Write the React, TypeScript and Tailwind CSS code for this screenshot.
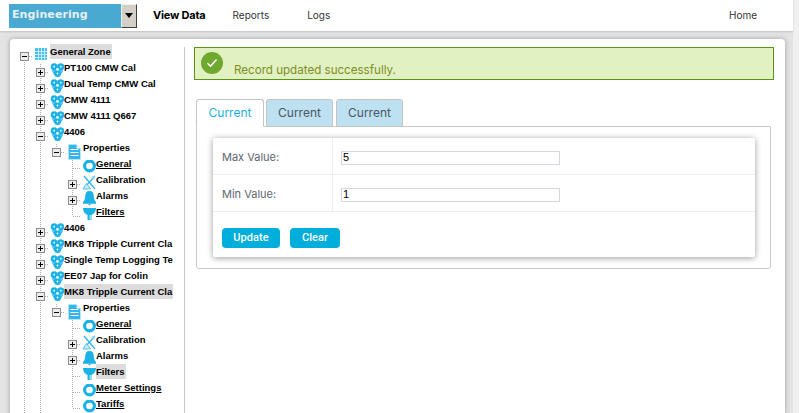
import React from "react";

const B = "#1cb2e6";

function Net() {
  return (
    <svg width="16" height="16" viewBox="0 0 16 16" className="shrink-0 -mt-px">
      <circle cx="9.500" cy="7" r="5.500" fill="#4fc4ee" />
      <circle cx="6.200" cy="3.700" r="3.500" fill={B} />
      <circle cx="12.800" cy="3.700" r="3.500" fill={B} />
      <circle cx="9.500" cy="10.500" r="3.500" fill={B} />
      <circle cx="6.200" cy="3.700" r="0.900" fill="#fff" />
      <circle cx="12.800" cy="3.700" r="0.900" fill="#fff" />
      <circle cx="9.500" cy="10.500" r="0.900" fill="#fff" />
      <circle cx="9.500" cy="6.400" r="1.300" fill="#fff" />
    </svg>
  );
}
function Grid() {
  return (
    <svg width="16" height="16" viewBox="0 0 16 16" className="shrink-0">
      <rect x="3" y="0" width="12" height="12" rx="1" fill="#45bdec" />
      {[6, 9, 12].map((v) => (
        <React.Fragment key={v}>
          <rect x={v} y="0" width="1" height="12" fill="#c5ecfb" />
          <rect x="3" y={v - 3} width="12" height="1" fill="#c5ecfb" />
        </React.Fragment>
      ))}
    </svg>
  );
}
function Doc() {
  return (
    <svg width="18" height="16" viewBox="0 0 18 16" className="shrink-0">
      <path d="M4.500 0.500h8l4 4v11h-12z" fill="#35b6ea" stroke="#b5e6f8" strokeWidth="1" />
      <path d="M12.500 0.500v4h4z" fill="#e6f7fd" />
      <path d="M6.500 5.500h8M6.500 8.500h8M6.500 11.500h8" stroke="#fff" strokeWidth="1.200" />
    </svg>
  );
}
function Ring() {
  return (
    <svg width="16" height="16" viewBox="0 0 16 16" className="shrink-0">
      <circle cx="9.500" cy="6" r="4.900" fill="#fff" stroke={B} strokeWidth="3.200" />
    </svg>
  );
}
function Cal() {
  return (
    <svg width="16" height="16" viewBox="0 0 16 16" className="shrink-0 -mt-px">
      <path d="M4 1l11 13M15 1L5 12" stroke="#35b6ea" strokeWidth="1.300" fill="none" />
      <path d="M3 14l3.500-5.500 4 5.500z" fill="#c5ebf9" stroke="#35b6ea" strokeWidth="0.800" />
      <path d="M11 2l4-1.500-1 4.500z" fill="#8ad6f3" />
    </svg>
  );
}
function Bell() {
  return (
    <svg width="16" height="16" viewBox="0 0 16 16" className="shrink-0 -mt-[2px]">
      <path d="M9.500 1c3 0 4 2 4.200 4.500.2 3 .5 5 2.300 6.500H3c1.800-1.500 2.100-3.500 2.300-6.500C5.500 3 6.500 1 9.500 1z" fill={B} />
      <rect x="3" y="12" width="13" height="1.800" fill={B} />
      <path d="M8 14h3l-1.500 1.600z" fill={B} />
    </svg>
  );
}
function Funnel() {
  return (
    <svg width="16" height="16" viewBox="0 0 16 16" className="shrink-0 -mt-px">
      <path d="M3 1h13c0 4-2.500 6-4.500 7v5H7.500V8C5.500 7 3 5 3 1z" fill={B} />
      <path d="M9.500 8h2v5h-2z" fill="#9adcf5" />
    </svg>
  );
}

const Guide = ({ on }: { on: boolean }) => (
  <svg width="16" height="16" viewBox="0 0 16 16" className="shrink-0" shapeRendering="crispEdges">
    {on && <path d="M8.500 0v16" stroke="#b0b0b0" strokeDasharray="1 1" />}
  </svg>
);

type Kind = "plus" | "minus" | "tee" | "corner";

function Conn({ kind, top = true, bottom = true }: { kind: Kind; top?: boolean; bottom?: boolean }) {
  const box = kind === "plus" || kind === "minus";
  const b = kind === "corner" ? false : bottom;
  return (
    <svg width="16" height="16" viewBox="0 0 16 16" className="shrink-0" shapeRendering="crispEdges">
      {top && <path d="M8.500 0v8" stroke="#b0b0b0" strokeDasharray="1 1" />}
      {b && <path d="M8.500 8v8" stroke="#b0b0b0" strokeDasharray="1 1" />}
      <path d="M8.500 8.500H16" stroke="#b0b0b0" strokeDasharray="1 1" />
      {box && (
        <>
          <rect x="4.500" y="4.500" width="8" height="8" fill="#ececec" stroke="#8c8c8c" />
          <path d="M6 8.500h5" stroke="#000" />
          {kind === "plus" && <path d="M8.500 6v5" stroke="#000" />}
        </>
      )}
    </svg>
  );
}

type Node = {
  level: number;
  kind: Kind;
  icon: React.ReactNode;
  text: string;
  u?: boolean;
  sel?: boolean;
  last?: boolean;
};

const rows: Node[] = [
  { level: 0, kind: "minus", icon: <Grid />, text: "General Zone", sel: true },
  { level: 1, kind: "plus", icon: <Net />, text: "PT100 CMW Cal" },
  { level: 1, kind: "plus", icon: <Net />, text: "Dual Temp CMW Cal" },
  { level: 1, kind: "plus", icon: <Net />, text: "CMW 4111" },
  { level: 1, kind: "plus", icon: <Net />, text: "CMW 4111 Q667" },
  { level: 1, kind: "minus", icon: <Net />, text: "4406" },
  { level: 2, kind: "minus", icon: <Doc />, text: "Properties", last: true },
  { level: 3, kind: "tee", icon: <Ring />, text: "General", u: true },
  { level: 3, kind: "plus", icon: <Cal />, text: "Calibration" },
  { level: 3, kind: "plus", icon: <Bell />, text: "Alarms" },
  { level: 3, kind: "corner", icon: <Funnel />, text: "Filters", u: true },
  { level: 1, kind: "plus", icon: <Net />, text: "4406" },
  { level: 1, kind: "plus", icon: <Net />, text: "MK8 Tripple Current Cla" },
  { level: 1, kind: "plus", icon: <Net />, text: "Single Temp Logging Te" },
  { level: 1, kind: "plus", icon: <Net />, text: "EE07 Jap for Colin" },
  { level: 1, kind: "minus", icon: <Net />, text: "MK8 Tripple Current Cla", sel: true },
  { level: 2, kind: "minus", icon: <Doc />, text: "Properties", last: true },
  { level: 3, kind: "tee", icon: <Ring />, text: "General", u: true },
  { level: 3, kind: "plus", icon: <Cal />, text: "Calibration" },
  { level: 3, kind: "plus", icon: <Bell />, text: "Alarms" },
  { level: 3, kind: "tee", icon: <Funnel />, text: "Filters", sel: true },
  { level: 3, kind: "tee", icon: <Ring />, text: "Meter Settings", u: true },
  { level: 3, kind: "corner", icon: <Ring />, text: "Tariffs", u: true },
];

function TreeRow({ n }: { n: Node }) {
  const guides = [n.level >= 1, n.level >= 2, false].slice(0, n.level);
  return (
    <div className="flex h-4 items-start">
      {guides.map((g, i) => (
        <Guide key={i} on={g} />
      ))}
      <Conn kind={n.kind} top={n.level > 0} bottom={!n.last} />
      {n.icon}
      <span
        className={
          "-mt-1 block h-[15px] whitespace-nowrap text-[9.500px] leading-[15px] font-bold text-black [font-family:'Liberation_Sans',sans-serif] " +
          (n.level === 0 ? "ml-[2px] " : "") +
          (n.level === 2 ? "ml-px " : "") +
          (n.u ? "underline " : "") +
          (n.sel ? "bg-[#dcdcdc] pr-px" : "")
        }
      >
        {n.text}
      </span>
    </div>
  );
}

function Tab({ label, active, w }: { label: string; active?: boolean; w: string }) {
  return (
    <div
      className={
        "flex h-7 items-center justify-center rounded-t-[3px] border border-[#c4c4c4] text-[12px] " +
        w +
        (active ? " border-b-white bg-white text-[#1db0dc]" : " bg-[#bde1f1] text-[#4b5663]")
      }
    >
      {label}
    </div>
  );
}

function FieldRow({ label, value }: { label: string; value: string }) {
  return (
    <div className="flex h-[37px] border-b border-[#efefef]">
      <div className="flex w-[120px] items-center border-r border-[#efefef] pt-[3px] pl-[9px] text-[11px] text-[#5c6670]">{label}</div>
      <div className="flex items-center pt-[3px] pl-2">
        <input
          readOnly
          value={value}
          className="h-[14px] w-[219px] border border-[#d2d6e6] bg-white pl-px text-[11px] text-black outline-none [font-family:'Liberation_Sans',sans-serif]"
        />
      </div>
    </div>
  );
}

export default function App() {
  return (
    <div className="flex h-screen overflow-hidden bg-[#f0f0f0] [font-family:Inter,sans-serif]">
      <div className="flex w-[793px] shrink-0 flex-col bg-[#e3e3e3]">
        <header className="flex h-[31px] shrink-0 items-center bg-white shadow-[0_1px_2px_rgba(0,0,0,0.15)]">
          <div className="ml-[9px] flex h-[24px] w-[128px] shrink-0 items-stretch">
            <div className="flex flex-1 items-center bg-[#4aa9d1] pl-[3px] text-[11px] font-bold tracking-[0.1px] text-[#e4f1f7] [font-family:'DejaVu_Sans',sans-serif]">
              Engineering
            </div>
            <div className="flex w-4 items-center justify-center border border-t-[#f0eee8] border-r-[#404040] border-b-[#404040] border-l-[#f0eee8] bg-[#d4d0c8]">
              <svg width="8" height="5" viewBox="0 0 8 5">
                <path d="M0 0h8L4 5z" fill="#000" />
              </svg>
            </div>
          </div>
          <nav className="flex flex-1 items-center text-[10px] text-[#333]">
            <span className="ml-4 text-[11px] font-bold tracking-[-0.2px] text-black">View Data</span>
            <span className="ml-[27px]">Reports</span>
            <span className="ml-[38px]">Logs</span>
            <span className="mr-9 ml-auto">Home</span>
          </nav>
        </header>
        <main className="mt-2 ml-[10px] flex w-[775px] flex-1 rounded-t-[4px] bg-white shadow-[0_0_5px_rgba(0,0,0,0.3)]">
          <aside className="mt-2 w-[175px] shrink-0 border-r border-[#c8c8c8] pt-px pl-[6px]">
            {rows.map((n, i) => (
              <TreeRow key={i} n={n} />
            ))}
          </aside>
          <section className="flex-1 pt-2 pl-[9px]">
            <div className="flex h-[33px] w-[580px] border border-[#5a9417] bg-[#e2f1c2]">
              <div className="mt-[4px] ml-[6px] flex size-[22px] items-center justify-center rounded-full bg-[#6fa82f]">
                <svg width="12" height="10" viewBox="0 0 12 10">
                  <path d="M1.500 5.200l3 3L10.500 1.500" stroke="#fff" strokeWidth="1.600" fill="none" />
                </svg>
              </div>
              <span className="mt-[14px] ml-[11px] text-[11.600px] leading-4 text-[#7d8f25]">Record updated successfully.</span>
            </div>
            <div className="mt-[19px] ml-[2px] flex">
              <Tab label="Current" active w="w-[68px] z-10" />
              <Tab label="Current" w="w-[67px] ml-[2px]" />
              <Tab label="Current" w="w-[67px] ml-[3px]" />
            </div>
            <div className="-mt-px ml-[2px] h-[143px] w-[575px] rounded-b-[3px] border border-[#c9c9c9] pt-[11px] pl-4">
              <div className="h-[119px] w-[542px] rounded-[2px] bg-white shadow-[0_1px_6px_rgba(0,0,0,0.4)]">
                <FieldRow label="Max Value:" value="5" />
                <FieldRow label="Min Value:" value="1" />
                <div className="flex gap-[10px] pt-[16px] pl-[9px]">
                  <button className="h-5 w-[58px] rounded-[4px] bg-[#00aedb] text-[11px] font-medium tracking-[0.1px] text-white [font-family:Roboto,sans-serif]">
                    Update
                  </button>
                  <button className="h-5 w-[50px] rounded-[4px] bg-[#00aedb] text-[11px] font-medium tracking-[0.1px] text-white [font-family:Roboto,sans-serif]">
                    Clear
                  </button>
                </div>
              </div>
            </div>
          </section>
        </main>
      </div>
    </div>
  );
}
